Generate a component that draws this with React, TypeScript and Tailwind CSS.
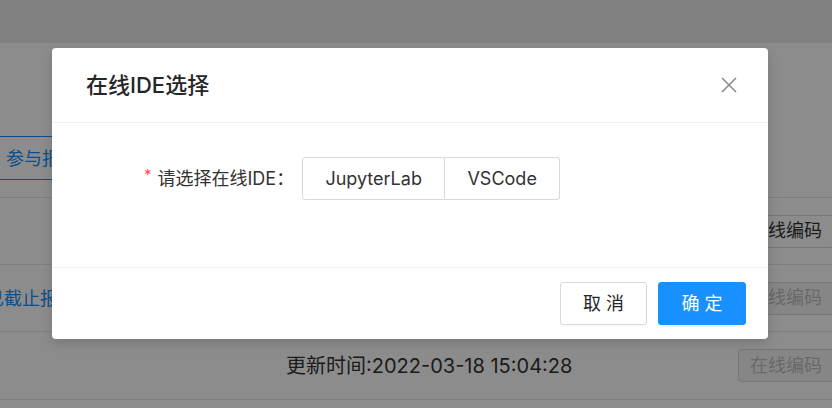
const font = "font-['Inter','Noto_Sans_CJK_SC',sans-serif]";

const PageButton = ({ disabled }: { disabled?: boolean }) => (
  <button
    className={
      disabled
        ? "h-[33px] w-[96px] shrink-0 mr-[-2px] rounded-[3px] border border-[#d9d9d9] bg-[#f5f5f5] text-[18px] text-[#bfbfbf] leading-none"
        : "h-[33px] w-[96px] shrink-0 mr-[-2px] rounded-[3px] border border-[#d9d9d9] bg-white text-[18px] text-[#333] leading-none"
    }
  >
    在线编码
  </button>
);

const CloseIcon = () => (
  <svg width="16" height="16" viewBox="0 0 16 16" fill="none">
    <path d="M1 1L15 15M15 1L1 15" stroke="#8c8c8c" strokeWidth="1.6" />
  </svg>
);

export default function App() {
  return (
    <div className={`relative w-[832px] h-[408px] overflow-hidden bg-white ${font}`}>
      {/* page under the mask */}
      <div className="h-[43px] bg-[#ebebeb]" />
      <div className="h-[155px] border-b border-[#e8e8e8] pt-[93px]">
        <div className="flex h-[44px] w-[140px] items-center border-y border-[#1890ff] pl-[6px] text-[18px] text-[#1890ff]">
          参与报名
        </div>
      </div>
      <div className="flex h-[67px] items-center justify-end border-b border-[#e8e8e8]">
        <PageButton />
      </div>
      <div className="flex h-[67px] items-center border-b border-[#e8e8e8]">
        <span className="ml-[-14px] text-[18px] text-[#1890ff]">已截止报名</span>
        <div className="ml-auto">
          <PageButton disabled />
        </div>
      </div>
      <div className="flex h-[68px] items-center border-b border-[#e8e8e8]">
        <span className="ml-[286px] text-[20px] text-[#333]">更新时间:2022-03-18 15:04:28</span>
        <div className="ml-auto">
          <PageButton disabled />
        </div>
      </div>

      {/* mask */}
      <div className="absolute inset-0 bg-black/45" />

      {/* modal */}
      <div className="absolute left-[52px] top-[48px] w-[716px] rounded-[4px] bg-white shadow-[0_4px_12px_rgba(0,0,0,0.15)]">
        <div className="flex h-[75px] items-center justify-between border-b border-[#f0f0f0] pl-[34px] pr-[31px]">
          <h2 className="text-[22px] font-medium text-[#262626]">在线IDE选择</h2>
          <CloseIcon />
        </div>
        <div className="flex h-[144px] items-start pl-[92px] pt-[34px]">
          <div className="flex h-[43px] items-center text-[18px] text-[#333]">
            <span className="mr-[6px] mt-[-6px] text-[15px] text-[#ff4d4f]">*</span>
            <span>请选择在线IDE：</span>
          </div>
          <div className="ml-[8px] flex h-[43px] text-[18px] text-[#333]">
            <div className="flex w-[143px] items-center justify-center rounded-l-[3px] border border-[#d9d9d9]">
              JupyterLab
            </div>
            <div className="flex w-[115px] items-center justify-center rounded-r-[3px] border border-l-0 border-[#d9d9d9]">
              VSCode
            </div>
          </div>
        </div>
        <div className="flex h-[72px] items-start justify-end gap-[11px] border-t border-[#f0f0f0] pr-[22px] pt-[14px]">
          <button className="h-[43px] w-[87px] rounded-[3px] border border-[#d9d9d9] bg-white text-[18px] text-[#262626] shadow-[0_2px_0_rgba(0,0,0,0.015)]">
            取 消
          </button>
          <button className="h-[43px] w-[88px] rounded-[3px] border border-[#1890ff] bg-[#1890ff] text-[18px] text-white shadow-[0_2px_0_rgba(0,0,0,0.045)]">
            确 定
          </button>
        </div>
      </div>
    </div>
  );
}
